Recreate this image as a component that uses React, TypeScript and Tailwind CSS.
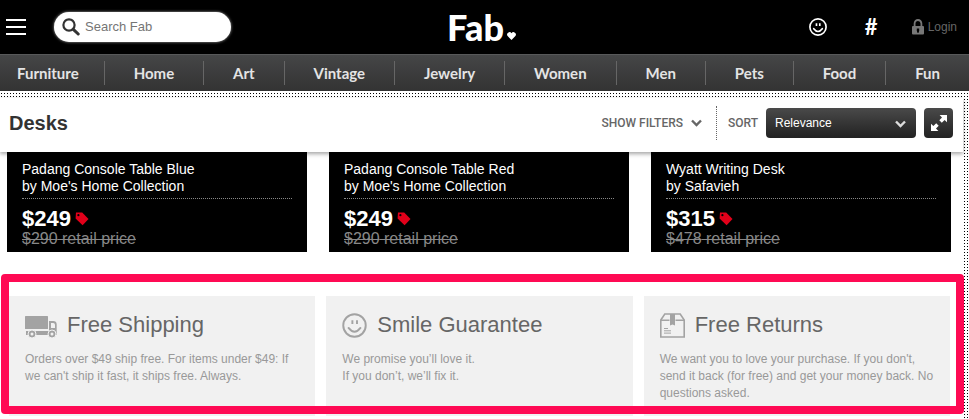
import { useState } from "react";

const categories = ["Furniture", "Home", "Art", "Vintage", "Jewelry", "Women", "Men", "Pets", "Food", "Fun"]

const products = [
    { name: "Padang Console Table Blue", brand: "Moe's Home Collection", price: "$249", retail: "$290" },
    { name: "Padang Console Table Red", brand: "Moe's Home Collection", price: "$249", retail: "$290" },
    { name: "Wyatt Writing Desk", brand: "Safavieh", price: "$315", retail: "$478" },
]

function SearchIcon() {
    return (
        <svg width="18" height="18" viewBox="0 0 18 18" fill="none" stroke="#333" aria-hidden="true">
            <circle cx="7" cy="7" r="5.6" strokeWidth="2.2" />
            <path d="M11.3 11.3 L16.2 16" strokeWidth="3" strokeLinecap="round" />
        </svg>
    )
}

function Smile({ size, stroke }: { size: number, stroke: number }) {
    return (
        <svg width={size} height={size} viewBox="0 0 26 26" fill="none" stroke="currentColor" strokeWidth={stroke} aria-hidden="true">
            <circle cx="13" cy="13" r="11.7" />
            <path d="M10.8 7.5 V11.5 M15.6 7.5 V11.5" />
            <path d="M6.8 15.5 Q13 23.5 19.2 15.5" strokeLinecap="round" />
        </svg>
    )
}

function LockIcon() {
    return (
        <svg width="12" height="16" viewBox="0 0 12 16" aria-hidden="true">
            <path d="M2.6 8 V4.4 a3.4 3.4 0 0 1 6.8 0 V8" fill="none" stroke="#777" strokeWidth="1.8" />
            <rect y="7" width="12" height="8.5" rx="1" fill="#777" />
            <path d="M4.8 9.6 h2.4 v1.8 l-.5 2.4 h-1.4 l-.5-2.4z" fill="#000" />
        </svg>
    )
}

function Chevron() {
    return (
        <svg width="11" height="8" viewBox="0 0 11 8" fill="none" stroke="currentColor" strokeWidth="2.4" aria-hidden="true">
            <path d="M1 1.5 L5.5 6 L10 1.5" />
        </svg>
    )
}

function ExpandIcon() {
    return (
        <svg width="16" height="16" viewBox="0 0 16 16" fill="#fff" aria-hidden="true">
            <path d="M8.6 0 H16 V7.2 L13.6 5 L10.8 7.7 L8.3 5.2 L11 2.4z" />
            <path d="M7.4 16 H0 V8.8 L2.4 11 L5.2 8.3 L7.7 10.8 L5 13.6z" />
        </svg>
    )
}

function TagIcon() {
    return (
        <svg width="14" height="14" viewBox="0 0 14 14" aria-hidden="true">
            <path d="M1 0.5 H7.2 L13.5 6.9 L7.6 13.2 L0.6 6.6z" fill="#e2001a" />
            <circle cx="3.4" cy="3.2" r="1.1" fill="#000" />
        </svg>
    )
}

function TruckIcon() {
    return (
        <svg width="32" height="22" viewBox="0 0 32 22" fill="#a3a3a3" aria-hidden="true">
            <rect width="23" height="13" rx="0.5" />
            <path d="M24 5 h4.2 a3.5 3.5 0 0 1 3.5 3.2 V19 H1 v-4 h23z" />
            <path d="M26 7 h2.2 a1.8 1.8 0 0 1 1.8 1.8 V12 h-4z" fill="#f1f1f1" />
            <g stroke="#f1f1f1" strokeWidth="1">
                <circle cx="7" cy="18" r="4" />
                <circle cx="27" cy="18" r="4" />
            </g>
            <circle cx="7" cy="18" r="1.5" fill="#f1f1f1" />
            <circle cx="27" cy="18" r="1.5" fill="#f1f1f1" />
        </svg>
    )
}

function BoxIcon() {
    return (
        <svg width="25" height="25" viewBox="0 0 25 25" fill="none" stroke="#a3a3a3" strokeWidth="1.6" aria-hidden="true">
            <path d="M0.8 7 L4.8 1 H20.2 L24.2 7 V24 H0.8z" />
            <path d="M0.8 7.2 H9.5 M15.5 7.2 H24.2" />
            <path d="M10 1 H15 V12.5 L12.5 11.5 L10 12.5z" fill="#a3a3a3" stroke="none" />
            <path d="M4 15.5 H8 M4 17.8 H11 M4 20.1 H11" strokeWidth="1" />
        </svg>
    )
}

const perks = [
    {
        title: "Free Shipping",
        icon: <TruckIcon />,
        text: "Orders over $49 ship free. For items under $49: If we can't ship it fast, it ships free. Always.",
    },
    {
        title: "Smile Guarantee",
        icon: <Smile size={25} stroke={2} />,
        text: "We promise you’ll love it.\nIf you don’t, we’ll fix it.",
    },
    {
        title: "Free Returns",
        icon: <BoxIcon />,
        text: "We want you to love your purchase. If you don't, send it back (for free) and get your money back. No questions asked.",
    },
]

function Header() {
    return (
        <header className="flex h-[54px] items-center bg-black text-white">
            <div className="flex flex-1 items-center pl-1.5">
                <button aria-label="Menu" className="flex w-5 flex-col gap-[5px]">
                    <span className="h-0.5 bg-white" />
                    <span className="h-0.5 bg-white" />
                    <span className="h-0.5 bg-white" />
                </button>
                <label className="ml-7 flex h-[30px] w-[177px] items-center gap-[5px] rounded-full bg-white pl-2 shadow-[0_0_3px_#aaa]">
                    <SearchIcon />
                    <input type="text" aria-label="Search" placeholder="Search Fab" className="w-32 text-[13px] text-black outline-none placeholder:text-[#757575]" />
                </label>
            </div>
            <a href="#" className="flex items-end font-[Lato,sans-serif] text-[36px] leading-[54px] font-black">
                <span>Fab</span>
                <svg width="9" height="8" viewBox="0 0 9 8" fill="#fff" className="mb-3.5 ml-[3px]" aria-hidden="true">
                    <path d="M4.5 8 L0.6 4 A2.3 2.3 0 0 1 4.5 1.2 A2.3 2.3 0 0 1 8.4 4z" />
                </svg>
            </a>
            <div className="flex flex-1 items-center justify-end pr-3">
                <button aria-label="Smiles"><Smile size={18} stroke={2.4} /></button>
                <button className="ml-[38px] font-[Lato,sans-serif] text-[22px] leading-6 font-bold">#</button>
                <a href="#" className="ml-[34px] flex items-center gap-1 text-[12px] text-[#666]">
                    <LockIcon />
                    Login
                </a>
            </div>
        </header>
    )
}

function CategoryNav() {
    return (
        <nav className="flex h-[37px] items-center border-t border-[#58595a] bg-linear-to-b from-[#454647] to-[#333]">
            {categories.map(item => (
                <a
                    key={item}
                    href="#"
                    className="flex h-6 flex-auto items-center justify-center border-r border-[#666] px-6 font-[Lato,sans-serif] text-[15px] font-bold text-[#e4e4e4] first:flex-none first:pr-[25px] first:pl-[17px] last:border-r-0"
                >
                    {item}
                </a>
            ))}
        </nav>
    )
}

function Toolbar() {
    const [sort, setSort] = useState("Relevance")

    return (
        <div className="relative flex h-[54px] items-center bg-white pr-2.5 pb-1 pl-[9px] shadow-[0_2px_4px_rgba(0,0,0,0.35)]">
            <h1 className="flex-1 text-[20px] leading-6 font-bold text-[#333]">Desks</h1>
            <button className="flex items-center gap-2 font-[Roboto,sans-serif] text-[12px] font-medium text-[#666]">
                SHOW FILTERS
                <Chevron />
            </button>
            <div className="mr-[11px] ml-3.5 h-[34px] border-l border-dotted border-[#666]" />
            <label htmlFor="sort" className="mr-2 font-[Roboto,sans-serif] text-[12px] font-medium text-[#666]">SORT</label>
            <div className="relative mr-2 w-[150px] text-[#ddd]">
                <select
                    id="sort"
                    value={sort}
                    onChange={e => setSort(e.target.value)}
                    className="h-[30px] w-full appearance-none rounded bg-linear-to-b from-[#4a4a4a] to-[#222] pl-[9px] text-[12px] text-white"
                >
                    <option>Relevance</option>
                    <option>Newest</option>
                </select>
                <span className="pointer-events-none absolute top-3 right-2.5"><Chevron /></span>
            </div>
            <button aria-label="Expand" className="flex h-[30px] w-[29px] items-center justify-center rounded bg-linear-to-b from-[#4a4a4a] to-[#222]">
                <ExpandIcon />
            </button>
        </div>
    )
}

function App() {
    return (
        <div className="bg-[conic-gradient(from_270deg_at_1px_1px,#000_90deg,#fff_0)] bg-size-[3px_3px] bg-position-[1px_0px] font-['Liberation_Sans',Arial,sans-serif]">
            <Header />
            <CategoryNav />
            <main className="mt-[7px] mr-1.5 bg-white pb-[3px]">
                <Toolbar />
                <div className="grid grid-cols-3 gap-[22px] pr-3 pl-[7px]">
                    {products.map(item => (
                        <article key={item.name} className="h-[100px] bg-black px-[15px] pt-[9px] text-white">
                            <h2 className="border-b border-dotted border-[#888] pb-[3px] text-[14px] leading-[17px]">
                                {item.name}<br />by {item.brand}
                            </h2>
                            <p className="flex items-center gap-1 pt-2 text-[22px] leading-6 font-bold">
                                {item.price}
                                <TagIcon />
                            </p>
                            <p className="text-[16px] leading-4 text-[#888] line-through">{item.retail} retail price</p>
                        </article>
                    ))}
                </div>
                <section className="relative mt-[22px] pt-[22px]">
                    <div className="grid grid-cols-3 gap-[11px] pr-[13px] pl-[9px]">
                        {perks.map(perk => (
                            <div key={perk.title} className="h-[120px] bg-[#f1f1f1] px-4 pt-3.5">
                                <h3 className="flex h-[30px] items-center gap-2.5 text-[22px] leading-6 text-[#666]">
                                    <span className="flex h-[25px] items-end text-[#a3a3a3]">{perk.icon}</span>
                                    {perk.title}
                                </h3>
                                <p className="pt-[11px] text-[12px] leading-[17px] whitespace-pre-line text-[#999]">{perk.text}</p>
                            </div>
                        ))}
                    </div>
                    <div className="pointer-events-none absolute top-0 -right-px bottom-0.5 left-px rounded border-8 border-[#ff0a54]" />
                </section>
            </main>
        </div>
    )
}

export default App
